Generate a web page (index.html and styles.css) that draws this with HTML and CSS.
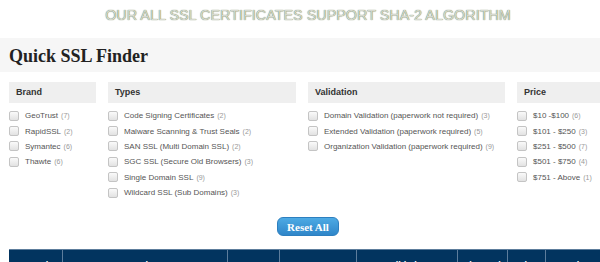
FILE: index.html
```html
<!DOCTYPE html>
<html lang="en">
<head>
    <meta charset="UTF-8">
    <title>Quick SSL Finder</title>
    <link rel="stylesheet" href="styles.css">
</head>
<body>
    <div class="page">
        <!-- Top announcement -->
        <p class="sha-note">OUR ALL SSL CERTIFICATES SUPPORT SHA-2 ALGORITHM</p>

        <!-- Finder title band -->
        <div class="finder-head">
            <h2>Quick SSL Finder</h2>
        </div>

        <!-- Filter columns -->
        <div class="filters">
            <div class="filter-col">
                <div class="filter-title">Brand</div>
                <ul class="filter-list">
                    <li><span class="box"></span>GeoTrust <span class="count">(7)</span></li>
                    <li><span class="box"></span>RapidSSL <span class="count">(2)</span></li>
                    <li><span class="box"></span>Symantec <span class="count">(6)</span></li>
                    <li><span class="box"></span>Thawte <span class="count">(6)</span></li>
                </ul>
            </div>
            <div class="filter-col">
                <div class="filter-title">Types</div>
                <ul class="filter-list">
                    <li><span class="box"></span>Code Signing Certificates <span class="count">(2)</span></li>
                    <li><span class="box"></span>Malware Scanning &amp; Trust Seals <span class="count">(2)</span></li>
                    <li><span class="box"></span>SAN SSL (Multi Domain SSL) <span class="count">(2)</span></li>
                    <li><span class="box"></span>SGC SSL (Secure Old Browsers) <span class="count">(3)</span></li>
                    <li><span class="box"></span>Single Domain SSL <span class="count">(9)</span></li>
                    <li><span class="box"></span>Wildcard SSL (Sub Domains) <span class="count">(3)</span></li>
                </ul>
            </div>
            <div class="filter-col">
                <div class="filter-title">Validation</div>
                <ul class="filter-list">
                    <li><span class="box"></span>Domain Validation (paperwork not required) <span class="count">(3)</span></li>
                    <li><span class="box"></span>Extended Validation (paperwork required) <span class="count">(5)</span></li>
                    <li><span class="box"></span>Organization Validation (paperwork required) <span class="count">(9)</span></li>
                </ul>
            </div>
            <div class="filter-col">
                <div class="filter-title">Price</div>
                <ul class="filter-list">
                    <li><span class="box"></span>$10 -$100 <span class="count">(6)</span></li>
                    <li><span class="box"></span>$101 - $250 <span class="count">(3)</span></li>
                    <li><span class="box"></span>$251 - $500 <span class="count">(7)</span></li>
                    <li><span class="box"></span>$501 - $750 <span class="count">(4)</span></li>
                    <li><span class="box"></span>$751 - Above <span class="count">(1)</span></li>
                </ul>
            </div>
        </div>

        <!-- Reset -->
        <div class="reset-row">
            <button class="reset-btn">Reset All</button>
        </div>

        <!-- Results table -->
        <table class="results">
            <thead>
                <tr>
                    <th class="c-brand">Brand</th>
                    <th class="c-product">Product</th>
                    <th class="c-issue">Issuance</th>
                    <th class="c-warranty">Warranty</th>
                    <th class="c-valid">Validation</th>
                    <th class="c-seal">Site Seal</th>
                    <th class="c-price">Price</th>
                    <th class="c-action">Action</th>
                </tr>
            </thead>
        </table>
    </div>
</body>
</html>
```

FILE: styles.css
```css
/* General */
body {
    margin: 0;
    font-family: "Liberation Sans", Arial, sans-serif;
    background: #fff;
    color: #555;
    overflow: hidden;
}

.page {
    width: 616px;
}

/* Announcement */
.sha-note {
    margin: 0;
    height: 38px;
    padding-top: 7px;
    box-sizing: border-box;
    text-align: center;
    font-size: 14.4px;
    color: #d6d9d0;
    text-shadow: 0 0 1px #3d5521;
}

/* Title band */
.finder-head {
    background: #f6f6f6;
    height: 34px;
    padding: 0 9px;
    display: flex;
    align-items: center;
}

.finder-head h2 {
    margin: 2px 0 0;
    font-family: "Liberation Serif", Georgia, serif;
    font-size: 18px;
    font-weight: bold;
    color: #222;
}

/* Filters */
.filters {
    display: grid;
    grid-template-columns: 87px 188px 197px 90px;
    gap: 12px;
    padding: 0 9px;
    margin-top: 10px;
}

.filter-title {
    background: #efefef;
    height: 21px;
    line-height: 21px;
    padding-left: 7px;
    font-size: 9px;
    font-weight: bold;
    color: #333;
}

.filter-list {
    list-style: none;
    padding: 0;
    margin: 5px 0 0;
}

.filter-list li {
    display: flex;
    align-items: center;
    height: 15.4px;
    font-size: 8px;
    color: #555;
    white-space: nowrap;
}

.filter-list .box {
    width: 8px;
    height: 8px;
    margin-right: 6px;
    border: 1px solid #c4c4c4;
    border-radius: 2px;
    background: linear-gradient(#fafafa, #e2e2e2);
    flex-shrink: 0;
}

.filter-list .count {
    color: #999;
    font-size: 7px;
    margin-left: 3px;
}

/* Reset button */
.reset-row {
    display: flex;
    justify-content: center;
    margin-top: 17px;
    padding: 0 9px;
}

.reset-btn {
    width: 62px;
    height: 19px;
    padding: 0;
    border: 1px solid #2d7fbf;
    border-radius: 6px;
    background: linear-gradient(#4daae4, #2f86c9);
    color: #fff;
    font-family: "Liberation Serif", Georgia, serif;
    font-size: 11px;
    font-weight: bold;
    cursor: pointer;
}

/* Results table */
.results {
    margin: 13px 0 0 9px;
    width: 598px;
    border-collapse: collapse;
    table-layout: fixed;
}

.results th {
    box-sizing: border-box;
    background: #02345f;
    color: #fff;
    font-size: 9px;
    font-weight: bold;
    height: 24px;
    padding: 10px 0 0;
    vertical-align: top;
    white-space: nowrap;
    overflow: hidden;
    border-top: 1px solid #5d7d9c;
    border-left: 1px solid #5d7d9c;
}

.results th:first-child {
    border-left: none;
}

.c-brand { width: 53px; }
.c-product { width: 165px; }
.c-issue { width: 52px; }
.c-warranty { width: 77px; }
.c-valid { width: 101px; }
.c-seal { width: 50px; }
.c-price { width: 38px; }
.c-action { width: 62px; }
```
